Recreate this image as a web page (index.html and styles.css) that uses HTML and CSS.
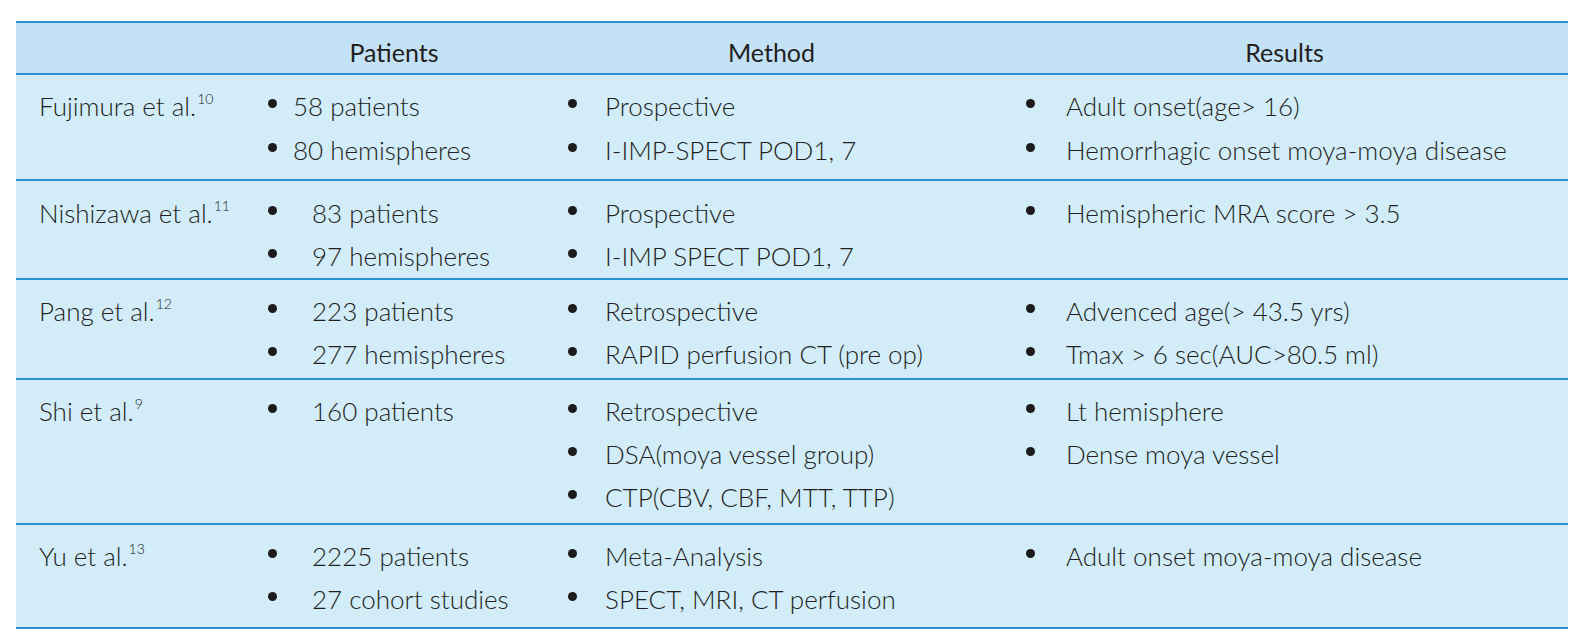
FILE: index.html
```html
<!DOCTYPE html>
<html>
<head>
<meta charset="utf-8">
<link rel="stylesheet" href="styles.css">
</head>
<body>
<div class="tbl">
  <div class="row head">
    <div class="cell"></div>
    <div class="cell">Patients</div>
    <div class="cell">Method</div>
    <div class="cell">Results</div>
  </div>
  <div class="row r1">
    <div class="cell name">Fujimura et al.<sup>10</sup></div>
    <div class="cell"><ul class="list tight"><li>58 patients</li><li>80 hemispheres</li></ul></div>
    <div class="cell"><ul class="list m"><li>Prospective</li><li>I-IMP-SPECT POD1, 7</li></ul></div>
    <div class="cell"><ul class="list r"><li>Adult onset(age&gt; 16)</li><li>Hemorrhagic onset moya-moya disease</li></ul></div>
  </div>
  <div class="row r2">
    <div class="cell name">Nishizawa et al.<sup>11</sup></div>
    <div class="cell"><ul class="list"><li>83 patients</li><li>97 hemispheres</li></ul></div>
    <div class="cell"><ul class="list m"><li>Prospective</li><li>I-IMP SPECT POD1, 7</li></ul></div>
    <div class="cell"><ul class="list r"><li>Hemispheric MRA score &gt; 3.5</li></ul></div>
  </div>
  <div class="row r3">
    <div class="cell name">Pang et al.<sup>12</sup></div>
    <div class="cell"><ul class="list"><li>223 patients</li><li>277 hemispheres</li></ul></div>
    <div class="cell"><ul class="list m"><li>Retrospective</li><li>RAPID perfusion CT (pre op)</li></ul></div>
    <div class="cell"><ul class="list r"><li>Advenced age(&gt; 43.5 yrs)</li><li>Tmax &gt; 6 sec(AUC&gt;80.5 ml)</li></ul></div>
  </div>
  <div class="row r4">
    <div class="cell name">Shi et al.<sup>9</sup></div>
    <div class="cell"><ul class="list"><li>160 patients</li></ul></div>
    <div class="cell"><ul class="list m"><li>Retrospective</li><li>DSA(moya vessel group)</li><li>CTP(CBV, CBF, MTT, TTP)</li></ul></div>
    <div class="cell"><ul class="list r"><li>Lt hemisphere</li><li>Dense moya vessel</li></ul></div>
  </div>
  <div class="row r5">
    <div class="cell name">Yu et al.<sup>13</sup></div>
    <div class="cell"><ul class="list"><li>2225 patients</li><li>27 cohort studies</li></ul></div>
    <div class="cell"><ul class="list m"><li>Meta-Analysis</li><li>SPECT, MRI, CT perfusion</li></ul></div>
    <div class="cell"><ul class="list r"><li>Adult onset moya-moya disease</li></ul></div>
  </div>
</div>
</body>
</html>
```
FILE: styles.css
```css
html, body {
  margin: 0;
  padding: 0;
  background: #ffffff;
}

body {
  font-family: "Lato", "Noto Sans", sans-serif;
  font-weight: 300;
  color: #231f20;
  font-size: 26px;
}

.tbl {
  margin: 21px 0 0 16px;
  width: 1552px;
  border-top: 2px solid #2b8fd2;
}

.row {
  display: grid;
  grid-template-columns: 230px 296px 459px 567px;
  border-bottom: 2px solid #2b8fd2;
  background: #d2ecf8;
  box-sizing: content-box;
}

.head {
  background: #c3e2f5;
  height: 50px;
}

.head .cell {
  font-weight: 400;
  font-size: 25px;
  text-align: center;
  line-height: 50px;
  padding-top: 4px;
  height: 46px;
}

.r1 { height: 104px; }
.r1 .cell { padding-top: 9px; line-height: 44px; }
.r2 { height: 97px; }
.r2 .cell { padding-top: 11px; line-height: 43px; }
.r3 { height: 98px; }
.r3 .cell { padding-top: 10px; line-height: 43px; }
.r4 { height: 143px; }
.r4 .cell { padding-top: 10px; line-height: 43px; }
.r5 { height: 102px; }
.r5 .cell { padding-top: 10px; line-height: 43px; }

.name {
  padding-left: 23px;
}

sup {
  font-size: 14px;
  line-height: 0;
  vertical-align: 0;
  position: relative;
  top: -12px;
  margin-left: 1px;
}

.list {
  list-style: none;
  margin: 0;
  padding: 0;
}

.list li {
  display: flex;
  align-items: center;
}

.list li::before {
  content: "";
  flex: none;
  width: 9px;
  height: 9px;
  border-radius: 50%;
  background: #1c1a1b;
  margin-top: -6px;
}

/* patients column */
.list li::before { margin-left: 22px; margin-right: 35px; }
.list.tight li::before { margin-left: 22px; margin-right: 16px; }

/* method column */
.list.m li::before { margin-left: 26px; margin-right: 28px; }

/* results column */
.list.r li::before { margin-left: 25px; margin-right: 31px; }
```
